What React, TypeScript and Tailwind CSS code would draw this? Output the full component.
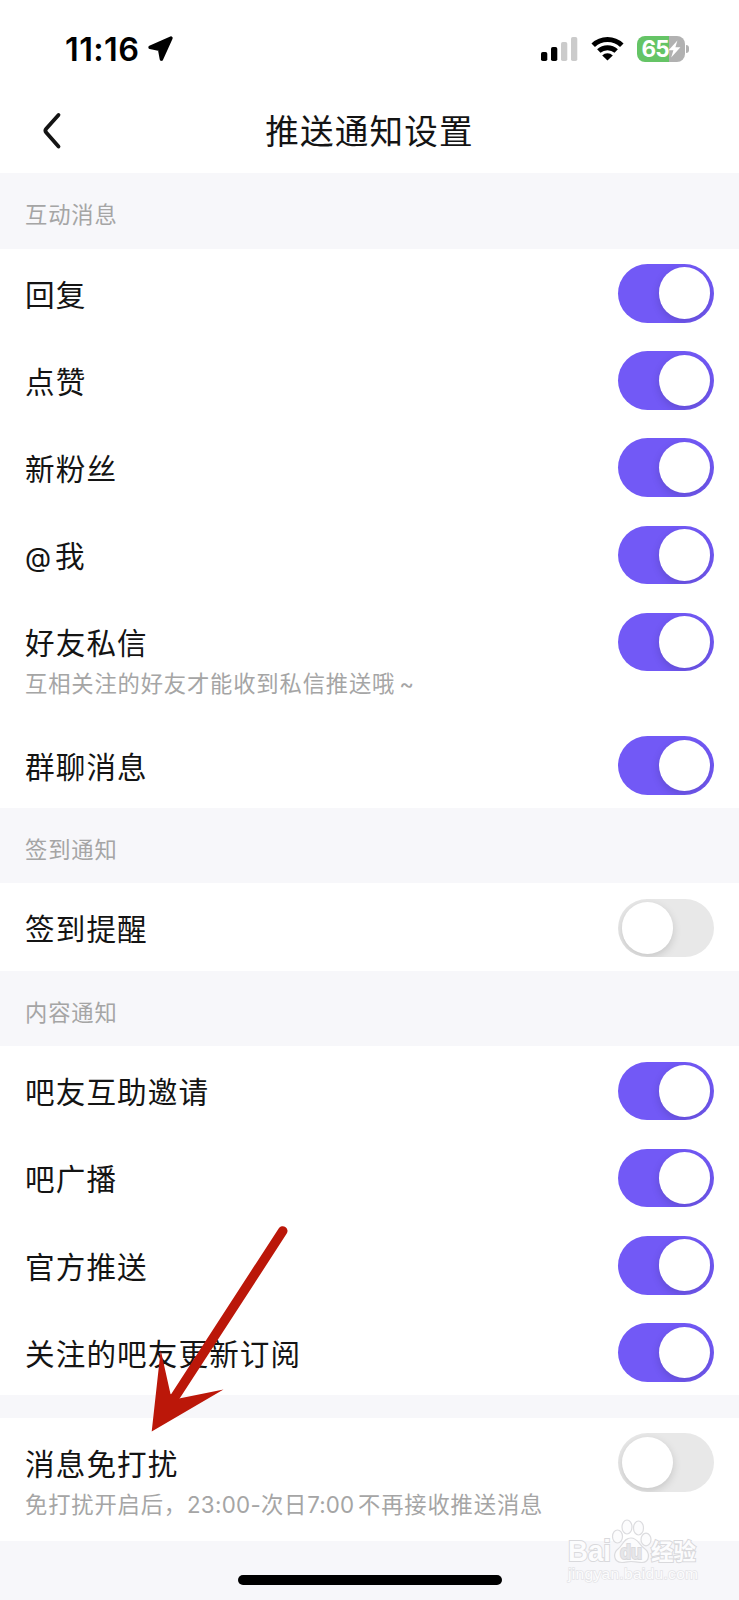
import type { ReactNode } from 'react';

type Item = {
    id: string;
    label: ReactNode;
    on: boolean;
    note?: ReactNode;
};

type Section = {
    title?: string;
    items: Item[];
};

const sections: Section[] = [
    {
        title: '互动消息',
        items: [
            { id: 'reply', label: '回复', on: true },
            { id: 'like', label: '点赞', on: true },
            { id: 'fans', label: '新粉丝', on: true },
            {
                id: 'at',
                label: (
                    <>
                        <span className="mr-[4px] text-[27px] tracking-normal">@</span>我
                    </>
                ),
                on: true,
            },
            {
                id: 'message',
                label: '好友私信',
                on: true,
                note: (
                    <>
                        互相关注的好友才能收到私信推送哦<span className="ml-[4px]">~</span>
                    </>
                ),
            },
            { id: 'group', label: '群聊消息', on: true },
        ],
    },
    {
        title: '签到通知',
        items: [{ id: 'sign', label: '签到提醒', on: false }],
    },
    {
        title: '内容通知',
        items: [
            { id: 'invite', label: '吧友互助邀请', on: true },
            { id: 'broadcast', label: '吧广播', on: true },
            { id: 'official', label: '官方推送', on: true },
            { id: 'subscribe', label: '关注的吧友更新订阅', on: true },
        ],
    },
    {
        items: [
            {
                id: 'dnd',
                label: '消息免打扰',
                on: false,
                note: (
                    <>
                        免打扰开启后，<span className="tracking-[0.3px]">23:00-</span>次日
                        <span className="mr-[4px] tracking-[0.1px]">7:00</span>不再接收推送消息
                    </>
                ),
            },
        ],
    },
];

function StatusBar() {
    return (
        <div className="flex h-[98px] items-center justify-between pr-[50px] pl-[65px]">
            <div className="flex items-center gap-[8px]">
                <span className="pt-[2px] text-[32.5px] leading-none font-semibold tracking-[0.4px] text-black">11:16</span>
                <svg width="27" height="26" viewBox="0 0 27 26">
                    <path
                        d="M24 2 3 11.3 12.6 13.4 14.4 23.2Z"
                        fill="black"
                        stroke="black"
                        strokeWidth="3.4"
                        strokeLinejoin="round"
                    />
                </svg>
            </div>
            <div className="flex items-center">
                <svg width="37" height="26" viewBox="0 0 37 26">
                    <rect x="0" y="16" width="6.3" height="9" rx="1.8" fill="black" />
                    <rect x="10" y="11" width="6.3" height="14" rx="1.8" fill="black" />
                    <rect x="20" y="6" width="6.3" height="19" rx="1.8" fill="#cbcbcb" />
                    <rect x="30" y="1" width="6.3" height="24" rx="1.8" fill="#cbcbcb" />
                </svg>
                <svg className="ml-[13px]" width="33" height="26" viewBox="0 0 33 26">
                    <g fill="none" stroke="black" strokeWidth="5">
                        <path d="M2.2 9.2A20.5 20.5 0 0 1 30.8 9.2" />
                        <path d="M7.8 15A13 13 0 0 1 25.2 15" />
                    </g>
                    <path d="M16.5 24.6 11.2 19.4A7.6 7.6 0 0 1 21.8 19.4Z" fill="black" />
                </svg>
                <div className="ml-[13px] flex items-center gap-[1.5px]">
                    <div className="flex h-[26px] w-[48px] items-center rounded-[8px] bg-[linear-gradient(to_right,#65c466_66%,#b1b1b1_66%)] pl-[5px]">
                        <span className="text-[22.5px] leading-none font-bold tracking-[-0.8px] text-white">65</span>
                        <svg className="-ml-[1px]" width="13" height="18" viewBox="0 0 13 18">
                            <path d="M9.4 0.5 0.6 10.2H5.4L3.2 17.5 12.4 7.3H7.4Z" fill="white" />
                        </svg>
                    </div>
                    <div className="h-[8px] w-[3px] rounded-r-full bg-[#b1b1b1]" />
                </div>
            </div>
        </div>
    );
}

function TitleBar() {
    return (
        <header className="grid h-[75px] grid-cols-[1fr_auto_1fr] items-start">
            <svg className="mt-[14px] ml-[41px]" width="22" height="38" viewBox="0 0 22 38">
                <path
                    d="M17.5 3 5.2 16.8Q3.6 18.7 5.2 20.6L17.5 34.5"
                    fill="none"
                    stroke="#141414"
                    strokeWidth="3.8"
                    strokeLinecap="round"
                />
            </svg>
            <h1 className="mt-[12px] text-[33.6px] leading-[44px] tracking-[1.2px] text-[#141414]">推送通知设置</h1>
        </header>
    );
}

function Toggle({ on }: { on: boolean }) {
    return (
        <button
            role="switch"
            aria-checked={on}
            className={
                on
                    ? 'flex h-[58.6px] w-[96.6px] shrink-0 items-center justify-end overflow-hidden rounded-full bg-[#7259f6] px-[4px]'
                    : 'flex h-[58.6px] w-[96.6px] shrink-0 items-center overflow-hidden rounded-full bg-[#e8e8e8] px-[4px]'
            }
        >
            <span className="size-[51.6px] rounded-full bg-white shadow-[0_3px_8px_rgba(0,0,0,0.15)]" />
        </button>
    );
}

function Row({ item }: { item: Item }) {
    return (
        <div
            className={
                item.note
                    ? 'flex h-[123.3px] items-start justify-between bg-white pt-[15.4px] pr-[24.8px] pl-[25px]'
                    : 'flex h-[87.2px] items-start justify-between bg-white pt-[15.4px] pr-[24.8px] pl-[25px]'
            }
        >
            <div className="pt-[10.6px]">
                <div className="h-[40px] text-[29.6px] leading-[40px] tracking-[1.1px] text-[#141414]">{item.label}</div>
                {item.note && (
                    <div className="mt-[5px] text-[22.3px] leading-[32px] tracking-[0.84px] text-[#a5a5a5]">{item.note}</div>
                )}
            </div>
            <Toggle on={item.on} />
        </div>
    );
}

function Watermark() {
    return (
        <svg className="absolute top-[1515px] left-[562px]" width="145" height="72" viewBox="0 0 145 72">
            <g fill="#fcfcfd" stroke="#dcdcdf" strokeWidth="1.2">
                <ellipse cx="55.5" cy="21.5" rx="5" ry="6.5" />
                <ellipse cx="65" cy="12" rx="5" ry="7" />
                <ellipse cx="76.5" cy="13" rx="5" ry="7" />
                <ellipse cx="84" cy="24.5" rx="5" ry="6.3" />
                <path d="M69 23C62 23 61 30 56 34C51 38 51 47 60 47.5C64 47.5 66 46.5 69 46.5S76 47.5 80 47.5C88 47 88 38 83 34C77 30 76 23 69 23Z" />
            </g>
            <g
                fill="#fcfcfd"
                stroke="#d9d9dc"
                strokeWidth="2"
                paintOrder="stroke"
                fontFamily="'Liberation Sans', 'Noto Sans CJK SC', sans-serif"
                fontWeight="700"
            >
                <text x="6" y="46" fontSize="30" textLength="43" lengthAdjust="spacingAndGlyphs">Bai</text>
                <text x="58" y="43.5" fontSize="20" textLength="22" lengthAdjust="spacingAndGlyphs" fill="#e6e6e9">du</text>
                <text x="89" y="45" fontSize="23" textLength="45" lengthAdjust="spacingAndGlyphs">经验</text>
            </g>
            <text
                x="6"
                y="64"
                fontSize="15.5"
                textLength="130"
                fill="#fcfcfd"
                stroke="#e4e4e7"
                strokeWidth="1.4"
                paintOrder="stroke"
                fontFamily="'Liberation Sans', sans-serif"
            >
                jingyan.baidu.com
            </text>
        </svg>
    );
}

export default function App() {
    return (
        <div className="relative flex h-[1600px] w-[739px] flex-col overflow-hidden bg-[#f7f7fa] font-[Inter,'Noto_Sans_CJK_SC',sans-serif]">
            <div className="bg-white">
                <StatusBar />
                <TitleBar />
            </div>
            <main className="flex-1">
                {sections.map((section, i) => (
                    <section key={i}>
                        {section.title ? (
                            <h2 className="h-[75.6px] pt-[26px] pl-[25px] text-[22.3px] leading-[32px] tracking-[0.84px] text-[#a5a5a5]">
                                {section.title}
                            </h2>
                        ) : (
                            <div className="h-[22.8px]" />
                        )}
                        {section.items.map((item) => (
                            <Row key={item.id} item={item} />
                        ))}
                    </section>
                ))}
            </main>
            <div className="mx-auto mb-[15px] h-[10px] w-[264px] rounded-full bg-black" />

            {/* pointer to the do-not-disturb row */}
            <svg className="absolute top-[1220px] left-[145px]" width="150" height="220" viewBox="0 0 150 220">
                <path d="M137.7 11 28 180" stroke="#bb1709" strokeWidth="9.6" strokeLinecap="round" />
                <path d="M6.7 211.5 15.7 130 25.5 174 34 178.5 78.5 169.5Z" fill="#bb1709" />
            </svg>

            <Watermark />
        </div>
    );
}
